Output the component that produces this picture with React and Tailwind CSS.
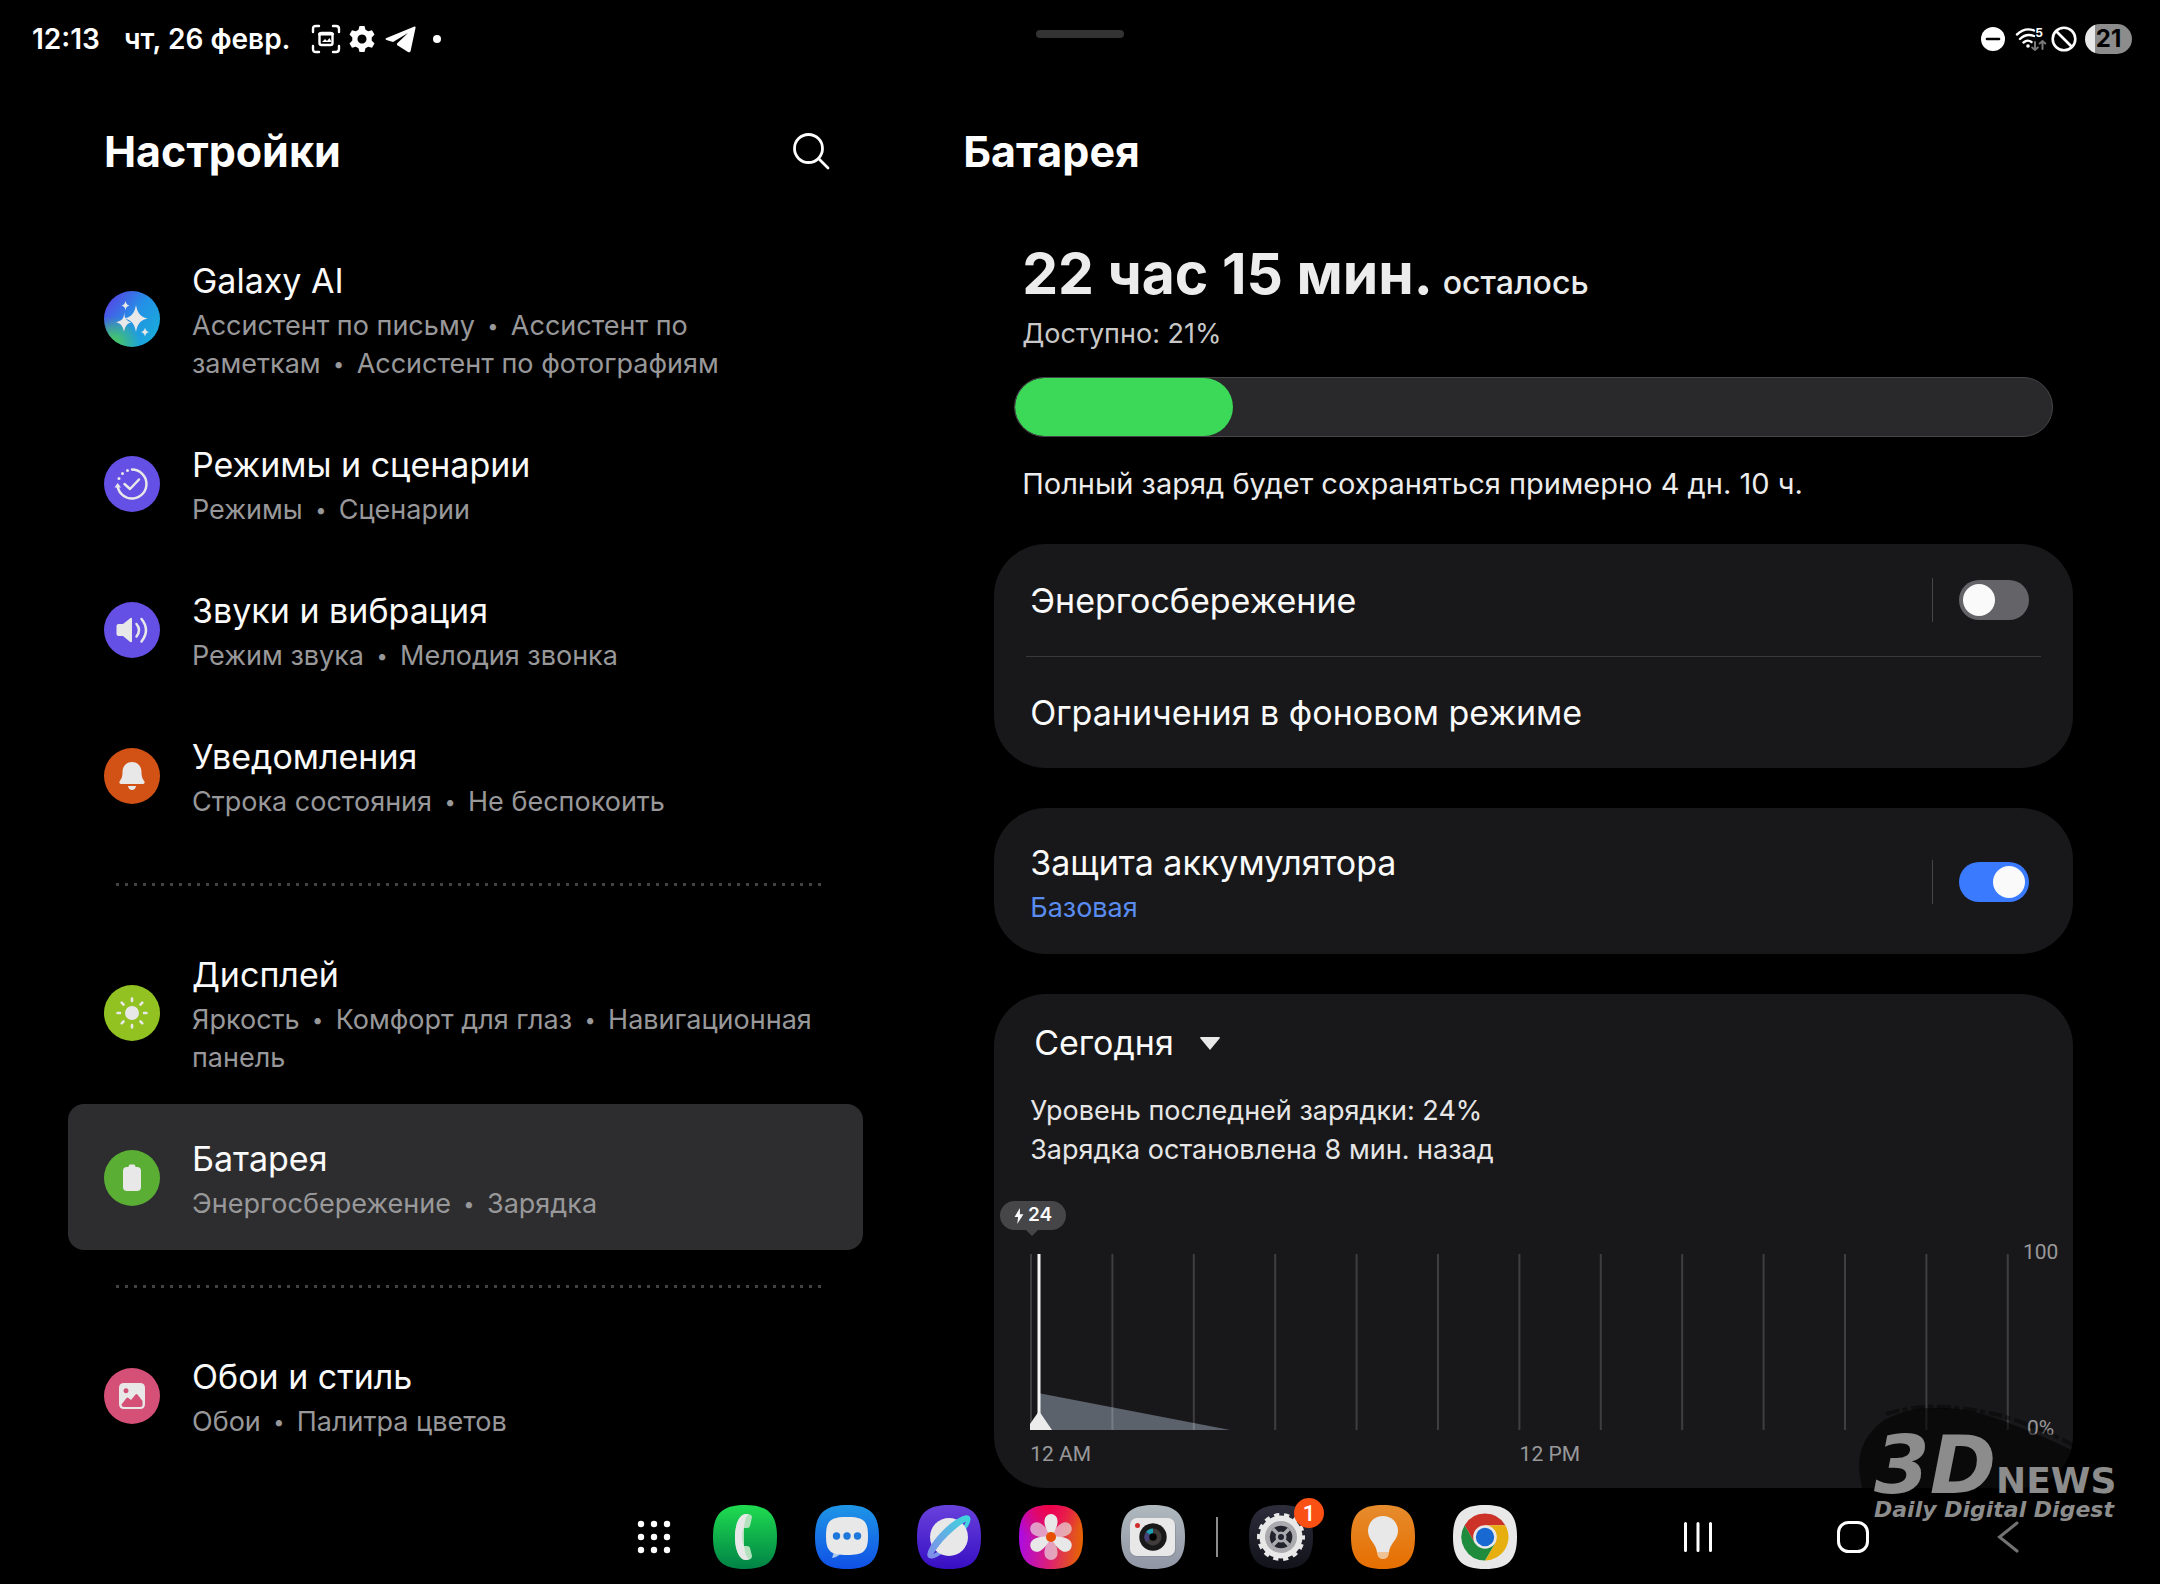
import clsx from "clsx";
import { Fragment, useState } from "react";

const SQUIRCLE = "M32 0C55 0 64 9 64 32S55 64 32 64 0 55 0 32 9 0 32 0Z";

/* ---------- Settings list icons (56x56) ---------- */

function GalaxyAiIcon() {
  return (
    <svg viewBox="0 0 56 56" className="size-14 shrink-0" aria-hidden="true">
      <defs>
        <linearGradient id="ai" x1="0.1" y1="0.1" x2="0.9" y2="0.7">
          <stop offset="0" stopColor="#5546e6" />
          <stop offset="0.55" stopColor="#2391e6" />
          <stop offset="1" stopColor="#1ba6dc" />
        </linearGradient>
        <radialGradient id="aiGreen" cx="0.15" cy="0.95" r="0.5">
          <stop offset="0" stopColor="#4ed04a" />
          <stop offset="1" stopColor="#4ed04a" stopOpacity="0" />
        </radialGradient>
      </defs>
      <circle cx="28" cy="28" r="28" fill="url(#ai)" />
      <circle cx="28" cy="28" r="28" fill="url(#aiGreen)" />
      <g fill="#e8e8e8">
        <path d="M32 14c1.500 8 4 11.500 11.500 13.500C36 29.500 33.500 33 32 41c-1.500-8-4-11.500-11.500-13.500C28 25.500 30.500 22 32 14Z" />
        <path d="M20.500 21c-.6 3.500-.6 5-2 6.800-1.500 1.800-3 2.700-6.500 3.400 5 1.300 7 3.800 8 9.800 1-6 3-8.500 7.500-9.800-5-1.200-7.500-4.200-7-10.200Z" />
        <path d="M21.500 10c.6 2.700 1.500 4 4 4.600-2.500.7-3.400 1.900-4 4.600-.6-2.700-1.500-3.900-4-4.600 2.500-.6 3.400-1.900 4-4.600ZM41 36.500c.6 2.700 1.500 3.900 4 4.500-2.500.7-3.400 1.900-4 4.600-.6-2.700-1.500-3.900-4-4.600 2.500-.6 3.400-1.800 4-4.500Z" />
      </g>
    </svg>
  );
}

function CircleIcon({ color, children }) {
  return (
    <svg viewBox="0 0 56 56" className="size-14 shrink-0" aria-hidden="true">
      <circle cx="28" cy="28" r="28" fill={color} />
      {children}
    </svg>
  );
}

const modesIcon = (
  <CircleIcon color="#6550e6">
    <path d="M28 13.500A14.500 14.500 0 1 1 13.600 30" fill="none" stroke="#e8e8e8" strokeWidth="2.500" strokeLinecap="round" />
    <path d="M10.500 31.500l3.200-4.500 3.300 4.500z" fill="#e8e8e8" />
    <g fill="#e8e8e8">
      <circle cx="15" cy="22.500" r="1.500" />
      <circle cx="18.500" cy="17.500" r="1.500" />
      <circle cx="23.500" cy="14.500" r="1.500" />
    </g>
    <path d="M20.500 28l5.500 5 9-9.500" fill="none" stroke="#e8e8e8" strokeWidth="2.500" strokeLinecap="round" strokeLinejoin="round" />
  </CircleIcon>
);

const soundIcon = (
  <CircleIcon color="#6550e6">
    <path d="M14.500 22H19l7.200-5.800q1.800-1 1.800 1V39q0 2-1.800 1L19 34h-4.500Q12.500 34 12.500 32v-8q0-2 2-2Z" fill="#e8e8e8" />
    <path d="M32.500 22q5 6 0 12.500M37.500 17q9 11 0 22.500" fill="none" stroke="#e8e8e8" strokeWidth="2.500" strokeLinecap="round" />
  </CircleIcon>
);

const bellIcon = (
  <CircleIcon color="#d25216">
    <path d="M28 14c-6 0-9.500 4.500-9.500 10 0 5-1.200 7-2.700 9-1 1.500-.3 3 1.400 3h21.600c1.700 0 2.400-1.500 1.400-3-1.500-2-2.700-4-2.700-9 0-5.500-3.500-10-9.500-10ZM24 38h8c-.4 2.600-2 4-4 4s-3.600-1.400-4-4Z" fill="#e8e8e8" />
  </CircleIcon>
);

const displayIcon = (
  <CircleIcon color="#91c222">
    <circle cx="28" cy="28" r="7" fill="#e8e8e8" />
    <path d="M28 13.500v2.500M28 40v2.500M13.500 28H16M40 28h2.500M17.700 17.700l1.800 1.800M36.500 36.500l1.800 1.800M17.700 38.300l1.800-1.800M36.500 19.500l1.800-1.800" stroke="#e8e8e8" strokeWidth="2.600" strokeLinecap="round" />
  </CircleIcon>
);

const batteryIcon = (
  <CircleIcon color="#5aae34">
    <path d="M26 14.500h4q1.500 0 1.500 2.500H33q4 0 4 4v16q0 4-4 4H23q-4 0-4-4V21q0-4 4-4h1.500q0-2.500 1.500-2.500Z" fill="#e8e8e8" />
  </CircleIcon>
);

const wallpaperIcon = (
  <CircleIcon color="#d45076">
    <path
      fillRule="evenodd"
      d="M20 15h16q5 0 5 5v16q0 5-5 5H20q-5 0-5-5V20q0-5 5-5Zm2 5.200a2.500 2.500 0 1 0 .01 0ZM17.500 36.500q0 2.500 3 2.500h15.500q3 0 2.500-3v-3l-5-6.500q-1-1-2 0L27 32l-2.500-2q-1-.8-2 0Z"
      fill="#e8e8e8"
    />
  </CircleIcon>
);

/* ---------- Taskbar app icons (64x64) ---------- */

function AppShape({ id, from, to, children }) {
  return (
    <svg viewBox="0 0 64 64" className="size-16" aria-hidden="true">
      <defs>
        <linearGradient id={id} x1="0" y1="0" x2="0" y2="1">
          <stop offset="0" stopColor={from} />
          <stop offset="1" stopColor={to} />
        </linearGradient>
      </defs>
      <path d={SQUIRCLE} fill={`url(#${id})`} />
      {children}
    </svg>
  );
}

const phoneApp = (
  <AppShape id="phone" from="#1fdc50" to="#008246">
    <path d="M33 9q6 0 6 3l-2 9q-.5 2-3 2h-3V41h3q2.500 0 3 2l2 8q0 4-6 4C26 55 22 44 22 32S26 9 33 9Z" fill="#b4e2bf" />
    <path d="M33 9h3q-3 2-4 7l-1 6q-2 4-2 10t2 9l1 6q1 5 4 7-1 1-3 1C26 55 22 44 22 32S26 9 33 9Z" fill="#e8e8e8" />
  </AppShape>
);

const messagesApp = (
  <AppShape id="messages" from="#1e96e6" to="#1050e6">
    <path d="M19 47l-2 6q5-.5 8-4z" fill="#a9c9ee" />
    <path d="M32 12C48 12 53 15 53 31S48 50 32 50 11 47 11 31 16 12 32 12Z" fill="#e8e8e8" />
    <g fill="#1e78dc">
      <circle cx="21.500" cy="31" r="3.700" />
      <circle cx="32" cy="31" r="3.700" />
      <circle cx="42.500" cy="31" r="3.700" />
    </g>
  </AppShape>
);

const internetApp = (
  <AppShape id="internet" from="#6941dc" to="#370fc3">
    <defs>
      <linearGradient id="ring" x1="0" y1="0" x2="1" y2="0">
        <stop offset="0" stopColor="#828ceb" />
        <stop offset="1" stopColor="#3cd7dc" />
      </linearGradient>
    </defs>
    <ellipse cx="32" cy="32" rx="27" ry="6" fill="none" stroke="url(#ring)" strokeWidth="4" transform="rotate(-45 32 32)" />
    <circle cx="32" cy="32" r="19" fill="#e8e8e8" />
    <path d="M3 32A29 9 0 0 1 61 32L57 34A26 5 0 0 0 7 34Z" fill="url(#ring)" transform="rotate(-45 32 32)" />
  </AppShape>
);

const PETAL = "M32 32C28 27 25 20 25.500 15.500A6.500 6.500 0 0 1 38.500 15.500C39 20 36 27 32 32Z";

const galleryApp = (
  <svg viewBox="0 0 64 64" className="size-16" aria-hidden="true">
    <defs>
      <linearGradient id="gallery" x1="0" y1="0.45" x2="1" y2="0.55">
        <stop offset="0" stopColor="#aa0ae6" />
        <stop offset="0.5" stopColor="#dc1e78" />
        <stop offset="1" stopColor="#e66400" />
      </linearGradient>
      <radialGradient id="galleryRed" cx="0.45" cy="0" r="0.6">
        <stop offset="0" stopColor="#f00046" />
        <stop offset="1" stopColor="#f00046" stopOpacity="0" />
      </radialGradient>
    </defs>
    <path d={SQUIRCLE} fill="url(#gallery)" />
    <path d={SQUIRCLE} fill="url(#galleryRed)" />
    {[60, 180, 300].map((angle) => (
      <path key={angle} d={PETAL} fill="#e8e8e8" opacity="0.65" transform={`rotate(${angle} 32 32)`} />
    ))}
    {[0, 120, 240].map((angle) => (
      <path key={angle} d={PETAL} fill="#e8e8e8" transform={`rotate(${angle} 32 32)`} />
    ))}
    <circle cx="32" cy="32" r="5" fill="#e65000" />
  </svg>
);

const cameraApp = (
  <AppShape id="camera" from="#afb9be" to="#9196a5">
    <rect x="9" y="14" width="46" height="38" rx="7" fill="#7d828c" opacity="0.5" />
    <rect x="9" y="13" width="45" height="38" rx="7" fill="#e8e8e8" />
    <circle cx="16.500" cy="20.500" r="2.500" fill="#d22d2d" />
    <circle cx="32" cy="32" r="13.700" fill="#191919" />
    <circle cx="32" cy="32" r="8.500" fill="#413c3c" />
    <path d="M32 32V23.500A8.500 8.500 0 0 0 25 27Z" fill="#1ea0b4" />
    <path d="M32 32L25 27A8.500 8.500 0 0 0 25 37Z" fill="#464178" />
    <circle cx="32" cy="32" r="3.800" fill="#000" />
  </AppShape>
);

const settingsApp = (
  <AppShape id="settings" from="#2d2d3c" to="#12121a">
    <circle cx="32" cy="32" r="21.500" fill="#e8e8e8" />
    <circle cx="32" cy="32" r="21.500" fill="none" stroke="#e8e8e8" strokeWidth="5" strokeDasharray="5 4.650" strokeDashoffset="2.500" />
    <circle cx="32" cy="32" r="16" fill="#aaaaaf" />
    <circle cx="32" cy="32" r="11.300" fill="#23232d" />
    <path d="M24 24l16 16M40 24L24 40" stroke="#aaaaaf" strokeWidth="3.500" />
    <circle cx="32" cy="32" r="5.500" fill="#aaaaaf" />
    <circle cx="32" cy="32" r="3" fill="#23232d" />
  </AppShape>
);

const tipsApp = (
  <AppShape id="tips" from="#e68c2d" to="#e66e00">
    <path d="M26 45h12v3q-1 6-6 6t-6-6Z" fill="#f0c396" />
    <path d="M32 11c9 0 15 7 15 15 0 9-8 12-9 21H26c-1-9-9-12-9-21 0-8 6-15 15-15Z" fill="#e8e8e8" />
  </AppShape>
);

const chromeApp = (
  <AppShape id="chrome" from="#e8e8e8" to="#e8e8e8">
    <path d="M11.600 20.250A23.500 23.500 0 0 1 52.350 20.250H32L21.800 37.900Z" fill="#cd3228" />
    <path d="M52.350 20.250A23.500 23.500 0 0 1 32 55.500L42.200 37.900 32 20.250Z" fill="#e6af0f" />
    <path d="M32 55.500A23.500 23.500 0 0 1 11.600 20.250L21.800 37.900 42.200 37.900Z" fill="#1e8c3c" />
    <circle cx="32" cy="32" r="11.800" fill="#e8e8e8" />
    <circle cx="32" cy="32" r="9.200" fill="#1969d2" />
  </AppShape>
);

/* ---------- Data ---------- */

const MENU = [
  [
    {
      title: "Galaxy AI",
      lines: [
        ["Ассистент по письму", "Ассистент по"],
        ["заметкам", "Ассистент по фотографиям"],
      ],
      icon: <GalaxyAiIcon />,
    },
    { title: "Режимы и сценарии", lines: [["Режимы", "Сценарии"]], icon: modesIcon },
    { title: "Звуки и вибрация", lines: [["Режим звука", "Мелодия звонка"]], icon: soundIcon },
    { title: "Уведомления", lines: [["Строка состояния", "Не беспокоить"]], icon: bellIcon },
  ],
  [
    {
      title: "Дисплей",
      lines: [["Яркость", "Комфорт для глаз", "Навигационная"], ["панель"]],
      icon: displayIcon,
    },
    { title: "Батарея", lines: [["Энергосбережение", "Зарядка"]], icon: batteryIcon, active: true },
  ],
  [{ title: "Обои и стиль", lines: [["Обои", "Палитра цветов"]], icon: wallpaperIcon }],
];

const APPS = [
  { name: "Телефон", icon: phoneApp },
  { name: "Сообщения", icon: messagesApp },
  { name: "Интернет", icon: internetApp },
  { name: "Галерея", icon: galleryApp },
  { name: "Камера", icon: cameraApp },
];

const RECENT_APPS = [
  { name: "Настройки", icon: settingsApp, badge: 1 },
  { name: "Советы", icon: tipsApp },
  { name: "Chrome", icon: chromeApp },
];

/* ---------- Sections ---------- */

function StatusBar() {
  return (
    <header className="relative flex h-20 items-center pr-7 pb-0.5 pl-8 text-[28px] font-semibold">
      <span>12:13</span>
      <span className="ml-6">чт, 26 февр.</span>
      <div className="ml-5 flex items-center gap-2">
        {/* Screenshot */}
        <svg viewBox="0 0 30 30" className="size-[30px]" fill="none" stroke="#fff" strokeWidth="2.400" strokeLinecap="round" aria-hidden="true">
          <path d="M2 8V5q0-3 3-3h3M22 2h3q3 0 3 3v3M28 22v3q0 3-3 3h-3M8 28H5q-3 0-3-3v-3" />
          <rect x="8.500" y="9" width="13" height="12" rx="2" />
          <path d="M8.500 10h13" strokeWidth="3" />
          <path d="M11 18l3-3 2 2 2.500-3 2 4z" fill="#fff" stroke="none" />
        </svg>
        {/* Settings */}
        <svg viewBox="0 0 26 28" className="h-7 w-[26px]" aria-hidden="true">
          <path
            fillRule="evenodd"
            d="M10.500 1h5l1 3.700 2.700 1.600 3.800-1 2.500 4.300L22.700 12.400v3.200l2.800 2.800-2.500 4.300-3.800-1-2.700 1.600-1 3.700h-5l-1-3.700-2.700-1.600-3.800 1L.5 18.400l2.800-2.800v-3.200L.5 9.600 3 5.300l3.800 1 2.700-1.600ZM13 9.500a4.500 4.500 0 1 0 .01 0Z"
            fill="#fff"
          />
        </svg>
        {/* Telegram */}
        <svg viewBox="0 0 32 28" className="ml-0.5 h-7 w-8" fill="#fff" aria-hidden="true">
          <path d="M29.500 1.500L1.500 13q-2 1.200 0 2l6.500 2L23 8 12 18.500v1.500l11 7q2 1 2.600-1L30.500 3q.3-2-1-1.500Z" />
        </svg>
        <span className="ml-2 size-2 rounded-full bg-white" />
      </div>

      <span className="absolute top-[30px] left-1/2 h-2 w-[88px] -translate-x-1/2 rounded-full bg-[#333333]" />

      <div className="ml-auto flex items-center">
        {/* Do not disturb */}
        <svg viewBox="0 0 24 24" className="size-6" aria-hidden="true">
          <circle cx="12" cy="12" r="12" fill="#fff" />
          <path d="M6 12h12" stroke="#000" strokeWidth="2.600" strokeLinecap="round" />
        </svg>
        {/* Wi-Fi */}
        <div className="relative ml-2.5">
          <svg viewBox="0 0 32 24" className="h-6 w-8" fill="none" strokeLinecap="round" aria-hidden="true">
            <path d="M2 7.500Q10 0 19 3.500M5 12q6-6 14-3M8.500 15.500q4-3.500 8-.5" stroke="#fff" strokeWidth="2.400" />
            <circle cx="13" cy="19" r="1.800" fill="#fff" />
            <path d="M20 15v8m-2.800-2.500L20 23l2.800-2.500M27.500 22v-8m-2.800 2.500 2.800-2.500 2.800 2.500" stroke="#777" strokeWidth="2" />
          </svg>
          <span className="absolute top-0 right-1 text-xs leading-[12px] font-bold">5</span>
        </div>
        {/* No SIM */}
        <svg viewBox="0 0 26 26" className="ml-1 size-[26px]" fill="none" stroke="#fff" strokeWidth="2.600" aria-hidden="true">
          <circle cx="13" cy="13" r="11.300" />
          <path d="M5 5l16 16" />
        </svg>
        {/* Battery charge */}
        <span className="ml-2 flex h-[30px] w-[47px] items-center justify-center rounded-full bg-linear-to-r from-[#e8e8e8] from-21% to-[#8c8c8c] to-21% text-2xl font-bold text-black">
          21
        </span>
      </div>
    </header>
  );
}

function MenuItem({ title, lines, icon, active }) {
  return (
    <li>
      <a
        href="#"
        aria-current={active ? "page" : undefined}
        className={clsx("flex items-center gap-8 rounded-2xl px-9 pt-[29px] pb-[27px]", active && "bg-[#2d2d2f]")}
      >
        {icon}
        <span className="block min-w-0">
          <span className="block text-[34px] leading-[52px] text-[#fafafa]">{title}</span>
          {lines.map((parts) => (
            <span key={parts[0]} className="block text-[27px] leading-[38px] whitespace-nowrap text-[#98989a]">
              {parts.map((part, i) => (
                <Fragment key={part}>
                  {i > 0 && <span className="inline-block w-9 text-center align-[2px] text-[20px] leading-5">•</span>}
                  {part}
                </Fragment>
              ))}
            </span>
          ))}
        </span>
      </a>
    </li>
  );
}

function Sidebar() {
  return (
    <nav className="w-[42%] shrink-0 pr-11 pl-[68px]">
      <div className="flex h-[146px] items-center justify-between pr-8 pb-1 pl-9">
        <h1 className="text-[43px] leading-[56px] font-bold">Настройки</h1>
        <button type="button" aria-label="Поиск">
          <svg viewBox="0 0 40 40" className="size-10" fill="none" stroke="#fff" strokeWidth="2.800" strokeLinecap="round" aria-hidden="true">
            <circle cx="17.500" cy="17.500" r="14" />
            <path d="M27.500 27.500l9.500 9.500" />
          </svg>
        </button>
      </div>
      {MENU.map((group, i) => (
        <div key={i}>
          {i > 0 && (
            <div className="flex h-[72px] items-center pr-10 pl-12">
              <div className="h-[3px] flex-1 bg-[repeating-linear-gradient(90deg,#424244_0_3px,transparent_3px_9px)]" />
            </div>
          )}
          <ul>
            {group.map((item) => (
              <MenuItem key={item.title} {...item} />
            ))}
          </ul>
        </div>
      ))}
    </nav>
  );
}

function Card({ className, children }) {
  return <section className={clsx("rounded-[52px] bg-[#18181a]", className)}>{children}</section>;
}

function Toggle({ id, defaultChecked }) {
  const [checked, setChecked] = useState(defaultChecked);

  return (
    <div className="flex h-11 items-center border-l border-[#464648] pl-[26px]">
      <input
        id={id}
        type="checkbox"
        role="switch"
        checked={checked}
        onChange={(e) => setChecked(e.target.checked)}
        className="flex h-10 w-[70px] appearance-none items-center rounded-full bg-[#646468] px-1 before:size-8 before:rounded-full before:bg-[#fafafa] checked:justify-end checked:bg-[#3a7aff]"
      />
    </div>
  );
}

function BatterySummary() {
  return (
    <section className="px-5 pb-9">
      <div className="px-2">
        <p className="flex items-baseline gap-2.5 text-[#ececec]">
          <span className="text-[57px] leading-[72px] font-bold">22 час 15 мин.</span>
          <span className="text-[32px] font-medium">осталось</span>
        </p>
        <p className="pt-0.5 text-[27px] leading-[44px] text-[#c8c8c8]">Доступно: 21%</p>
      </div>
      <div className="mt-[21px] h-[60px] overflow-hidden rounded-full border border-[#464648] bg-[#29292b]">
        <div className="h-full w-[21%] rounded-full bg-[#3cd858]" />
      </div>
      <p className="px-2 pt-[23px] text-[29px] leading-[48px] text-[#ececec]">
        Полный заряд будет сохраняться примерно 4 дн. 10 ч.
      </p>
    </section>
  );
}

function UsageChart() {
  return (
    <div className="grid grid-cols-[1fr_64px] pl-9">
      <div className="relative h-[176px]">
        <svg viewBox="0 0 978 176" preserveAspectRatio="none" className="h-full w-full overflow-visible" aria-hidden="true">
          <path d="M8 139L200 176H8Z" fill="#5c626c" />
          {Array.from({ length: 13 }, (_, i) => (
            <path key={i} d={`M${1 + i * 81.33} 0V176`} stroke="#fff" strokeOpacity="0.170" strokeWidth="2" />
          ))}
          <path d="M9 0V160" stroke="#f5f5f5" strokeWidth="3" />
          <path d="M0 176V170L9 157 22 176Z" fill="#ececec" />
        </svg>
        {/* Last charge marker */}
        <span className="absolute -top-[53px] -left-[30px] flex h-[29px] w-[66px] items-center justify-center gap-1 rounded-full bg-[#464648] text-[19px] font-semibold text-[#fafafa]">
          <svg viewBox="0 0 10 18" className="h-4 w-2.5" fill="#fafafa" aria-hidden="true">
            <path d="M6 0L0 10h4L3 18l7-11H6Z" />
          </svg>
          24
        </span>
        <span className="absolute -top-6 -left-1 size-0 border-x-[6px] border-t-[6px] border-x-transparent border-t-[#464648]" />
      </div>
      <div className="-mt-4 -mb-3 flex flex-col justify-between pl-3.5 font-[Roboto,sans-serif] text-[21px] leading-[28px] text-[#98989a]">
        <span>100</span>
        <span className="pl-1">0%</span>
      </div>
      <div className="grid grid-cols-2 pt-2.5 font-[Roboto,sans-serif] text-[21px] leading-[28px] text-[#98989a]">
        <span>12 AM</span>
        <span>12 PM</span>
      </div>
    </div>
  );
}

function BatteryPane() {
  return (
    <main className="min-w-0 flex-1 px-[87px]">
      <h2 className="-ml-[31px] flex h-[146px] items-center pb-1 text-[43px] font-bold">Батарея</h2>
      <div className="pt-3">
        <BatterySummary />
        <div className="flex flex-col gap-10">
          <Card className="px-8">
            <div className="flex h-[113px] items-center justify-between border-b border-[#39393b] pr-3 pl-1">
              <label htmlFor="power-saving" className="text-[34px] text-[#fafafa]">
                Энергосбережение
              </label>
              <Toggle id="power-saving" defaultChecked={false} />
            </div>
            <a href="#" className="flex h-[111px] items-center pl-1 text-[34px] text-[#fafafa]">
              Ограничения в фоновом режиме
            </a>
          </Card>

          <Card className="flex items-center justify-between pt-[29px] pr-11 pb-[27px] pl-9">
            <label htmlFor="battery-protection">
              <span className="block text-[34px] leading-[52px] text-[#fafafa]">Защита аккумулятора</span>
              <span className="block text-[27px] leading-[38px] text-[#5a8cf0]">Базовая</span>
            </label>
            <Toggle id="battery-protection" defaultChecked />
          </Card>

          <Card className="pb-5">
            <div className="px-9 pt-[25px]">
              <div className="ml-1 flex w-fit items-center">
                <select aria-label="Период" className="appearance-none bg-transparent pr-[26px] text-[34px] leading-[48px] text-[#fafafa]">
                  <option>Сегодня</option>
                </select>
                <svg viewBox="0 0 20 13" className="pointer-events-none h-[13px] w-5" fill="#e8e8e8" aria-hidden="true">
                  <path d="M1 0H19Q20.500 0 19.500 1.500L10 13 .5 1.500Q-.5 0 1 0Z" />
                </svg>
              </div>
              <p className="pt-6 text-[27px] leading-[39px] text-[#e6e6e6]">
                Уровень последней зарядки: 24%
                <br />
                Зарядка остановлена 8 мин. назад
              </p>
            </div>
            <div className="pt-[85px]">
              <UsageChart />
            </div>
          </Card>
        </div>
      </div>
    </main>
  );
}

function AppButton({ name, icon, badge }) {
  return (
    <button type="button" aria-label={name} className="relative size-16">
      {icon}
      {badge && (
        <span className="absolute -top-[7px] -right-[11px] flex size-[30px] items-center justify-center rounded-full bg-[#fa5014] font-[Roboto,sans-serif] text-[22px] font-medium">
          {badge}
        </span>
      )}
    </button>
  );
}

function Taskbar() {
  return (
    <footer className="grid h-24 grid-cols-[1fr_auto_1fr] items-center pt-0.5">
      <div />
      <div className="flex items-center gap-[38px] pr-1.5">
        <button type="button" aria-label="Все приложения" className="mr-1">
          <svg viewBox="0 0 34 34" className="size-[34px]" fill="#fff" aria-hidden="true">
            {[4, 17, 30].map((y) => [4, 17, 30].map((x) => <circle key={`${x}-${y}`} cx={x} cy={y} r="3.200" />))}
          </svg>
        </button>
        {APPS.map((app) => (
          <AppButton key={app.name} {...app} />
        ))}
        <span className="-mx-[7px] h-10 w-0.5 bg-[#8c8c8c]" />
        {RECENT_APPS.map((app) => (
          <AppButton key={app.name} {...app} />
        ))}
      </div>
      <div className="flex items-center justify-end gap-[119px] pr-[134px]">
        <button type="button" aria-label="Последние">
          <svg viewBox="0 0 36 36" className="size-9" stroke="#fff" strokeWidth="3" strokeLinecap="round" aria-hidden="true">
            <path d="M5.500 4.500v27M18 4.500v27M30.500 4.500v27" />
          </svg>
        </button>
        <button type="button" aria-label="Главный экран">
          <svg viewBox="0 0 36 36" className="size-9" fill="none" stroke="#fff" strokeWidth="3" aria-hidden="true">
            <rect x="3.500" y="3.500" width="29" height="29" rx="10" />
          </svg>
        </button>
        <button type="button" aria-label="Назад">
          <svg viewBox="0 0 36 36" className="size-9" fill="none" stroke="#fff" strokeWidth="3" strokeLinecap="round" aria-hidden="true">
            <path d="M27 4L9.500 18 27 32" />
          </svg>
        </button>
      </div>
    </footer>
  );
}

function Watermark() {
  return (
    <div className="pointer-events-none absolute right-0 bottom-0 h-[184px] w-[304px]">
      {/* Brush stroke */}
      <svg viewBox="0 0 304 184" className="absolute inset-0 h-full w-full" aria-hidden="true">
        <path d="M8 94C-2 62 2 40 28 20 60 2 110 4 155 24 215 46 304 90 304 120 260 150 200 152 150 153L60 144Q18 124 8 94Z" fill="#000" opacity="0.550" />
        <path d="M30 14Q80 -2 150 17 190 30 222 48" fill="none" stroke="#000" strokeWidth="4" strokeDasharray="14 3 5 4" opacity="0.400" />
      </svg>
      <div className="absolute top-[33px] left-[18px] font-['DejaVu_Sans',sans-serif] font-bold text-[#8c8c8c]">
        <div className="flex items-baseline">
          <span className="text-[80px] leading-[66px] italic">3D</span>
          <span className="text-[36px] leading-[36px]">NEWS</span>
        </div>
        <div className="text-[22px] leading-[22px] italic">Daily Digital Digest</div>
      </div>
    </div>
  );
}

export default function App() {
  return (
    <div className="relative flex min-h-screen flex-col bg-black font-[Inter,'Noto_Sans',sans-serif] text-white">
      <StatusBar />
      <div className="flex flex-1">
        <Sidebar />
        <BatteryPane />
      </div>
      <Taskbar />
      <Watermark />
    </div>
  );
}
